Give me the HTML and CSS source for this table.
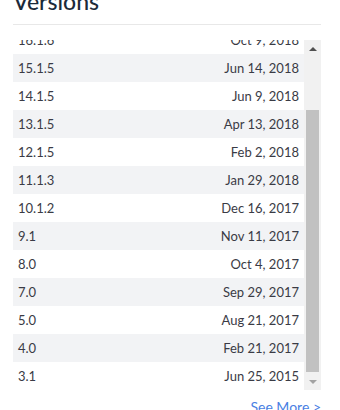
FILE: index.html
```html
<!DOCTYPE html>
<html lang="en">
<head>
<meta charset="utf-8">
<title>Versions</title>
<link rel="stylesheet" href="styles.css">
</head>
<body>
<div class="page">
  <h2 class="title">Versions</h2>
  <div class="versions">
    <div class="viewport">
      <ul class="list">
        <li class="row"><span>16.1.6</span><span>Oct 9, 2018</span></li>
        <li class="row"><span>15.1.5</span><span>Jun 14, 2018</span></li>
        <li class="row"><span>14.1.5</span><span>Jun 9, 2018</span></li>
        <li class="row"><span>13.1.5</span><span>Apr 13, 2018</span></li>
        <li class="row"><span>12.1.5</span><span>Feb 2, 2018</span></li>
        <li class="row"><span>11.1.3</span><span>Jan 29, 2018</span></li>
        <li class="row"><span>10.1.2</span><span>Dec 16, 2017</span></li>
        <li class="row"><span>9.1</span><span>Nov 11, 2017</span></li>
        <li class="row"><span>8.0</span><span>Oct 4, 2017</span></li>
        <li class="row"><span>7.0</span><span>Sep 29, 2017</span></li>
        <li class="row"><span>5.0</span><span>Aug 21, 2017</span></li>
        <li class="row"><span>4.0</span><span>Feb 21, 2017</span></li>
        <li class="row"><span>3.1</span><span>Jun 25, 2015</span></li>
      </ul>
    </div>
    <div class="scrollbar">
      <div class="btn"><span class="arrow up"></span></div>
      <div class="track"><div class="thumb"></div></div>
      <div class="btn"><span class="arrow down"></span></div>
    </div>
  </div>
  <div class="more"><a href="#">See More &gt;</a></div>
</div>
</body>
</html>
```
FILE: styles.css
```css
html, body {
  margin: 0;
  padding: 0;
  background: #fff;
}
body {
  font-family: Lato, "Open Sans", sans-serif;
  color: #3a3b45;
  overflow: hidden;
}
.page {
  width: 308px;
  padding-left: 13px;
  margin-top: -16px;
}
.title {
  margin: 0;
  font-size: 23px;
  font-weight: 500;
  line-height: 30px;
  color: #1b2a3a;
  padding: 2px 0 8px;
  border-bottom: 1px solid #e8e8e8;
}
.versions {
  margin-top: 15px;
  height: 350px;
  display: flex;
}
.viewport {
  flex: 1;
  overflow: hidden;
}
.list {
  list-style: none;
  margin: -14px 0 0;
  padding: 0;
}
.row {
  height: 28px;
  display: flex;
  align-items: center;
  justify-content: space-between;
  padding: 0 5px;
  font-size: 13px;
}
.row:nth-child(even) {
  background: #f2f3f5;
}
.scrollbar {
  width: 17px;
  background: #f1f1f1;
  display: flex;
  flex-direction: column;
}
.btn {
  height: 17px;
  display: flex;
  align-items: center;
  justify-content: center;
}
.arrow {
  width: 0;
  height: 0;
  border-left: 4px solid transparent;
  border-right: 4px solid transparent;
}
.arrow.up {
  border-bottom: 4px solid #505050;
}
.arrow.down {
  border-top: 4px solid #a3a3a3;
}
.track {
  flex: 1;
  display: flex;
  flex-direction: column;
  justify-content: flex-end;
  align-items: center;
}
.thumb {
  width: 13px;
  height: 262px;
  margin-bottom: 1px;
  background: #c1c1c1;
}
.more {
  display: flex;
  justify-content: flex-end;
  margin-top: 8px;
}
.more a {
  font-size: 14px;
  color: #4a7fe3;
  text-decoration: none;
}
```
